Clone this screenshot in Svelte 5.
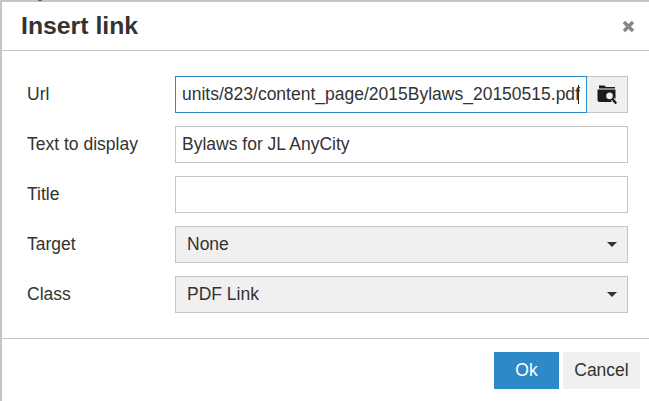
<script>
  let rows = [
    { label: 'Text to display', value: 'Bylaws for JL AnyCity' },
    { label: 'Title', value: '' }
  ];
  let lists = [
    { label: 'Target', value: 'None' },
    { label: 'Class', value: 'PDF Link' }
  ];
  let url = 'units/823/content_page/2015Bylaws_20150515.pdf';
</script>

<div class="dialog">
  <i class="peek"></i>
  <header>
    <h1>Insert link</h1>
    <button class="close" aria-label="Close">
      <svg width="13" height="13" viewBox="0 0 13 13">
        <path d="M2 2 L11 11 M11 2 L2 11" stroke="#858585" stroke-width="3.4" />
      </svg>
    </button>
  </header>

  <div class="body">
    <div class="row">
      <span class="label">Url</span>
      <div class="combo">
        <div class="input focus"><span class="scroll">{url}</span><i class="caret"></i></div>
        <button class="browse" aria-label="Browse">
          <svg width="20" height="20" viewBox="0 0 20 20">
            <path d="M2 0.5 H7.5 L9 2 H18 V3.5 H2 Z" fill="#1c1c1c" />
            <path d="M0.5 4.5 H18.5 V17 H2.5 Q0.5 17 0.5 15 Z" fill="#1c1c1c" />
            <circle cx="12.5" cy="10.8" r="4.2" fill="#f0f0f0" stroke="#1c1c1c" stroke-width="1.7" />
            <path d="M15.5 14 L19.2 18.6" stroke="#f0f0f0" stroke-width="4.4" />
            <circle cx="12.5" cy="10.8" r="4.2" fill="#f0f0f0" stroke="#1c1c1c" stroke-width="1.7" />
            <path d="M15.5 14 L19.2 18.6" stroke="#1c1c1c" stroke-width="2.4" />
          </svg>
        </button>
      </div>
    </div>
    {#each rows as r}
      <div class="row">
        <span class="label">{r.label}</span>
        <div class="input">{r.value}</div>
      </div>
    {/each}
    {#each lists as l}
      <div class="row">
        <span class="label">{l.label}</span>
        <div class="select">
          <span>{l.value}</span>
          <i class="arrow"></i>
        </div>
      </div>
    {/each}
  </div>

  <footer>
    <button class="btn primary">Ok</button>
    <button class="btn">Cancel</button>
  </footer>
</div>

<style>
  :global(body) {
    background: #fff;
    overflow: hidden;
  }
  .dialog {
    position: relative;
    width: 649px;
    height: 401px;
    box-sizing: border-box;
    border-top: 2px solid #c5c5c5;
    border-left: 2px solid #c5c5c5;
    font-family: 'Liberation Sans', Arial, sans-serif;
    font-size: 17.5px;
    color: #333;
    background: #fff;
  }
  /* bit of the page behind, showing over the top edge */
  .peek {
    position: absolute;
    top: -2px;
    left: 36px;
    width: 4px;
    height: 1px;
    background: #6b5f5c;
  }
  header {
    height: 48px;
    box-sizing: content-box;
    border-bottom: 1px solid #c5c5c5;
    display: flex;
    align-items: center;
    justify-content: space-between;
    padding: 0 14px 0 19px;
  }
  h1 {
    margin: 0;
    font-size: 24.8px;
    font-weight: bold;
    line-height: 48px;
    color: #333;
  }
  .close {
    border: 0;
    background: none;
    padding: 0;
    display: flex;
  }
  .body {
    padding: 25px 21px 0 25px;
    display: flex;
    flex-direction: column;
    gap: 13px;
    height: 287px;
    box-sizing: border-box;
  }
  .row {
    display: flex;
    align-items: center;
    height: 37px;
  }
  .label {
    width: 148px;
    flex: none;
  }
  .combo {
    flex: 1;
    display: flex;
    min-width: 0;
  }
  .input {
    flex: 1;
    min-width: 0;
    height: 37px;
    box-sizing: border-box;
    border: 1px solid #c5c5c5;
    padding: 0 6px;
    line-height: 35px;
    white-space: nowrap;
    overflow: hidden;
    position: relative;
    background: #fff;
  }
  .focus {
    border-color: #2d8ac7;
  }
  .caret {
    position: absolute;
    right: 7px;
    top: 8px;
    width: 1px;
    height: 19px;
    background: #222;
  }
  .browse {
    width: 41px;
    height: 37px;
    box-sizing: border-box;
    border: 1px solid #c5c5c5;
    border-left: 0;
    background: #f0f0f0;
    padding: 0;
    display: flex;
    align-items: center;
    justify-content: center;
  }
  .select {
    flex: 1;
    height: 37px;
    box-sizing: border-box;
    border: 1px solid #c5c5c5;
    background: #f0f0f0;
    padding: 0 10px 0 11px;
    display: flex;
    align-items: center;
    justify-content: space-between;
  }
  .arrow {
    width: 0;
    height: 0;
    border-left: 5px solid transparent;
    border-right: 5px solid transparent;
    border-top: 5px solid #333;
  }
  footer {
    border-top: 1px solid #c5c5c5;
    display: flex;
    justify-content: flex-end;
    gap: 4px;
    padding: 13px 9px 0 0;
  }
  .btn {
    height: 37px;
    width: 77px;
    border: 0;
    padding: 0;
    font: inherit;
    color: #333;
    background: #f0f0f0;
  }
  .primary {
    width: 65px;
    background: #2d8ac7;
    color: #fff;
  }
</style>
